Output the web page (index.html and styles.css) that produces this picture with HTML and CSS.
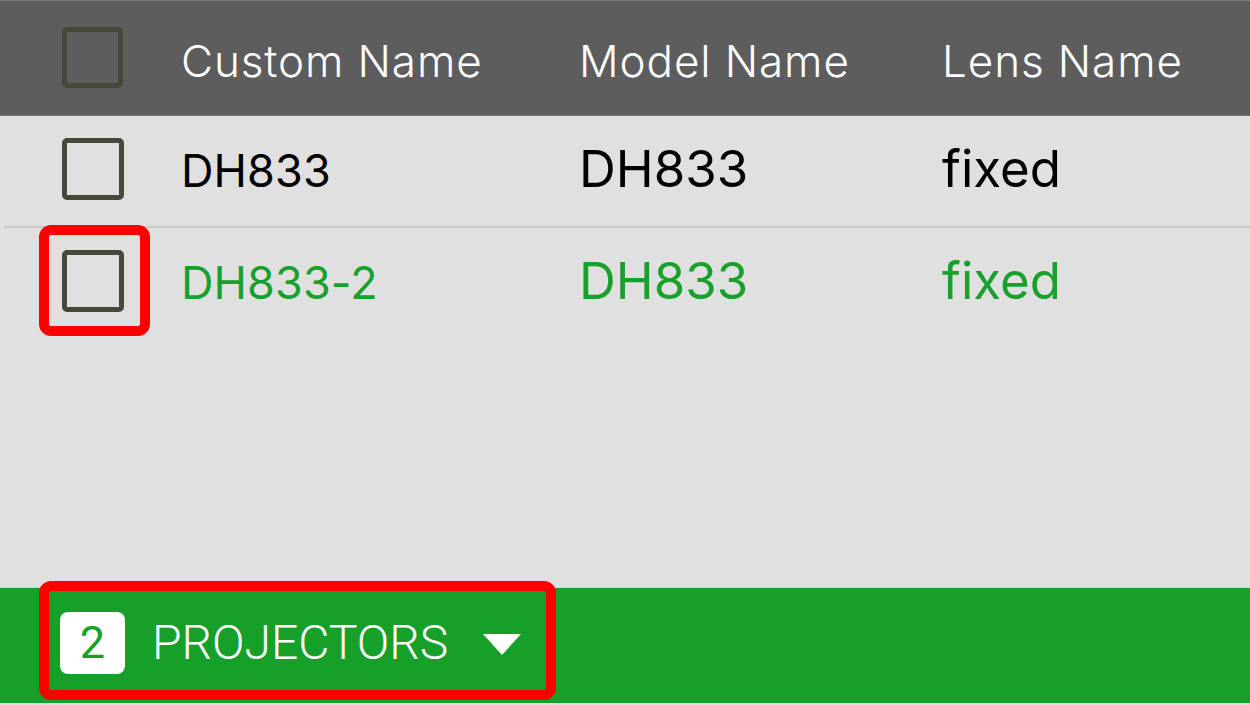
FILE: index.html
```html
<!DOCTYPE html>
<html>
<head>
<meta charset="utf-8">
<link rel="stylesheet" href="styles.css">
</head>
<body>
<div class="page">
  <div class="thead">
    <div class="cell cb-cell"><span class="checkbox"></span></div>
    <div class="cell th">Custom Name</div>
    <div class="cell th">Model Name</div>
    <div class="cell th">Lens Name</div>
  </div>
  <div class="row">
    <div class="cell cb-cell"><span class="checkbox"></span></div>
    <div class="cell custom">DH833</div>
    <div class="cell big">DH833</div>
    <div class="cell big">fixed</div>
  </div>
  <div class="sep"></div>
  <div class="row active">
    <div class="cell cb-cell"><span class="checkbox"></span></div>
    <div class="cell custom">DH833-2</div>
    <div class="cell big">DH833</div>
    <div class="cell big">fixed</div>
  </div>
  <div class="spacer"></div>
  <div class="footer">
    <span class="badge">2</span>
    <span class="label">PROJECTORS</span>
    <svg class="caret" width="38" height="21" viewBox="0 0 38 21"><polygon points="0,0 38,0 19,21" fill="#ffffff"/></svg>
  </div>
  <div class="highlight hl-check"></div>
  <div class="highlight hl-footer"></div>
</div>
</body>
</html>
```

FILE: styles.css
```css
* { box-sizing: border-box; }
html, body { margin: 0; padding: 0; }
body {
  background: #e0e0e0;
  font-family: "Inter", "Roboto", sans-serif;
  overflow: hidden;
}
.page {
  position: relative;
  width: 1250px;
  height: 705px;
  display: flex;
  flex-direction: column;
}
.thead, .row {
  display: grid;
  grid-template-columns: 181px 398px 363px 1fr;
  align-items: center;
}
.thead {
  height: 116px;
  background: #5d5d5d;
  border-top: 1px solid #7a7a7a;
  border-bottom: 1px solid #727272;
}
.cell { line-height: 1; white-space: nowrap; }
.cb-cell { padding-left: 62px; display: flex; align-items: center; }
.checkbox {
  display: block;
  width: 62px;
  height: 62px;
  border: 5px solid #48473c;
  border-radius: 5px;
}
.thead .checkbox { width: 61px; height: 61px; margin-top: -2px; }
.th {
  color: #ffffff;
  font-size: 44px;
  font-weight: 300;
  letter-spacing: 0.9px;
  padding-top: 6px;
}
.row {
  height: 110px;
  padding-bottom: 5px;
  color: #000000;
}
.row.active { color: #18a02c; }
.custom { font-size: 45px; padding-top: 3px; letter-spacing: 0.1px; }
.big { font-size: 51px; }
.sep {
  height: 2px;
  margin-left: 4px;
  background: #c9c9c9;
}
.spacer { flex: 1; }
.footer {
  height: 116px;
  margin-bottom: 2px;
  background: #16a02a;
  border-top: 1px solid #cfd6cf;
  display: flex;
  align-items: center;
  padding-left: 60px;
  padding-bottom: 6px;
}
.badge {
  width: 65px;
  height: 62px;
  background: #ffffff;
  border-radius: 8px;
  color: #16a02a;
  font-family: "Roboto", sans-serif;
  font-weight: 400;
  font-size: 45px;
  display: flex;
  align-items: center;
  justify-content: center;
  line-height: 1;
}
.label {
  margin-left: 27px;
  color: #ffffff;
  font-family: "Roboto", sans-serif;
  font-weight: 300;
  font-size: 48px;
  line-height: 1;
}
.caret { margin-left: 35px; margin-top: 4px; }
.highlight {
  position: absolute;
  border: 10px solid #ff0000;
  border-radius: 12px;
}
.hl-check { left: 39px; top: 225px; width: 111px; height: 111px; }
.hl-footer { left: 39px; top: 581px; width: 517px; height: 119px; }
```
